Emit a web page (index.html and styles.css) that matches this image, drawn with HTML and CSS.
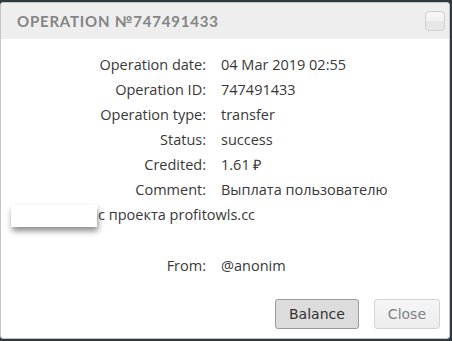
FILE: index.html
```html
<!DOCTYPE html>
<html lang="en">
<head>
    <meta charset="UTF-8">
    <title>Operation</title>
    <link rel="stylesheet" href="styles.css">
</head>
<body>
    <div class="dialog">
        <div class="dialog-header">
            <span class="dialog-title">Operation №747491433</span>
            <button class="dialog-close" title="close"></button>
        </div>

        <div class="dialog-body">
            <div class="row"><span class="label">Operation date:</span><span class="value">04 Mar 2019 02:55</span></div>
            <div class="row"><span class="label">Operation ID:</span><span class="value">747491433</span></div>
            <div class="row"><span class="label">Operation type:</span><span class="value">transfer</span></div>
            <div class="row"><span class="label">Status:</span><span class="value">success</span></div>
            <div class="row"><span class="label">Credited:</span><span class="value">1.61 ₽</span></div>
            <div class="row"><span class="label">Comment:</span><span class="value">Выплата пользователю<br><span class="redacted"></span>с проекта profitowls.cc</span></div>
            <div class="row row-from"><span class="label">From:</span><span class="value">@anonim</span></div>
        </div>

        <div class="dialog-footer">
            <button class="btn btn-primary">Balance</button>
            <button class="btn btn-light">Close</button>
        </div>
    </div>
</body>
</html>
```

FILE: styles.css
```css
* {
    margin: 0;
    padding: 0;
    box-sizing: border-box;
}

body {
    background: #2f3a40;
    padding-top: 2px;
    font-family: 'Open Sans', sans-serif;
}

.dialog {
    width: 450px;
    height: 337px;
    background: #fff;
    border: 1px solid #c4c4c4;
    border-radius: 3px;
    overflow: hidden;
}

.dialog-header {
    height: 36px;
    background: #eeeeee;
    display: flex;
    align-items: center;
    justify-content: space-between;
    padding: 0 4px 0 16px;
}

.dialog-title {
    font-family: 'Lato', sans-serif;
    font-weight: 700;
    font-size: 15px;
    letter-spacing: 0.8px;
    text-transform: uppercase;
    color: #858585;
}

.dialog-close {
    width: 20px;
    height: 20px;
    border: 1px solid #d0d0d0;
    border-radius: 4px;
    background: linear-gradient(#f5f5f5 0%, #f2f2f2 50%, #e6e6e6 50%, #e8e8e8 100%);
}

.dialog-body {
    padding: 13px 10px 0;
    font-size: 14.5px;
    line-height: 25px;
    color: #383838;
}

.row {
    min-height: 25px;
}

.label {
    display: inline-block;
    width: 195px;
    text-align: right;
}

.value {
    margin-left: 15px;
}

.redacted {
    display: inline-block;
    width: 86px;
    height: 22px;
    margin-right: 1px;
    vertical-align: middle;
    background: #fff;
    box-shadow: 1px 4px 6px rgba(0, 0, 0, 0.45);
}

.row-from {
    margin-top: 26px;
}

.dialog-footer {
    display: flex;
    justify-content: flex-end;
    gap: 15px;
    padding: 21px 9px 0 0;
}

.btn {
    height: 30px;
    padding: 0 13px;
    border-radius: 3px;
    font-family: 'DejaVu Sans', sans-serif;
    font-size: 14px;
}

.btn-primary {
    background: #dcdcdc;
    border: 1px solid #9a9a9a;
    color: #333;
}

.btn-light {
    background: linear-gradient(#f6f6f6, #ececec);
    border: 1px solid #d4d4d4;
    color: #808080;
}
```
